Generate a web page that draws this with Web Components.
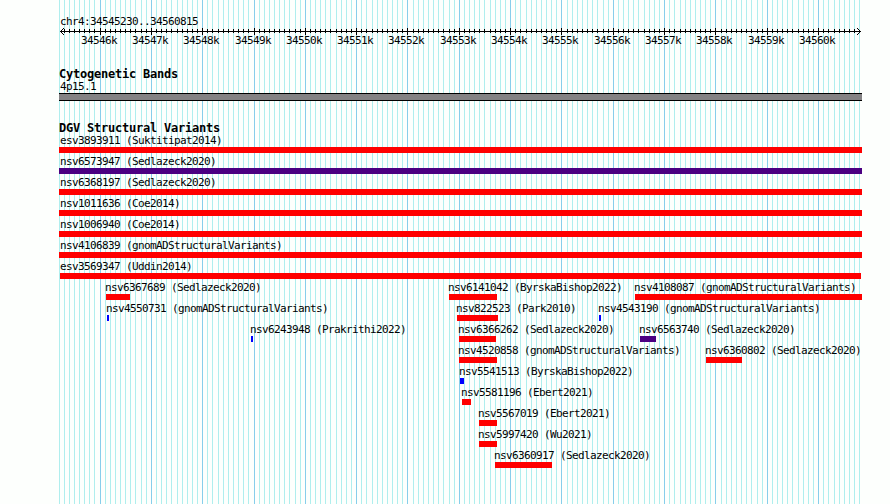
<!DOCTYPE html>
<html lang="en">
<head>
<meta charset="utf-8">
<title>chr4:34545230..34560815</title>
<style>
  html, body { margin: 0; background: #fdfffd; }
</style>
</head>
<body>
<genome-browser></genome-browser>
<script>
const START = 34545230, END = 34560815, LEFT = 60, SPAN = 800;
const pos = bp => Math.max(59, Math.round(LEFT + (bp - START) * SPAN / (END - START + 1)));

/* Vertical grid lines every 100 bp, stronger every 1000 bp */
class GenomeGrid extends HTMLElement {
  constructor() {
    super();
    let lines = '';
    for (let bp = 34545200; bp <= 34560800; bp += 100) {
      lines += `<rect x="${pos(bp)}" y="0" width="1" height="504" fill="${bp % 1000 ? '#afeeee' : '#87ceeb'}"/>`;
    }
    this.attachShadow({ mode: 'open' }).innerHTML = `
      <style>:host{display:block;position:absolute;inset:0} svg{display:block}</style>
      <svg width="890" height="504" shape-rendering="crispEdges">${lines}</svg>`;
  }
}
customElements.define('genome-grid', GenomeGrid);

/* Axis with arrowheads, ticks and kilobase labels */
class GenomeRuler extends HTMLElement {
  constructor() {
    super();
    let ticks = '', labels = '';
    for (let bp = 34545300; bp <= 34560700; bp += 100) {
      const major = bp % 1000 === 0, x = pos(bp);
      ticks += `<rect x="${x}" y="${major ? 0 : 1}" width="1" height="${major ? 7 : 4}"/>`;
      if (major) labels += `<span style="margin-left:${x - 19}px">${bp / 1000}k</span>`;
    }
    this.attachShadow({ mode: 'open' }).innerHTML = `
      <style>
        :host{display:block}
        svg{display:block;height:6px;overflow:visible}
        .labels{display:grid;height:13px}
        span{grid-area:1/1;justify-self:start}
      </style>
      <svg width="890" shape-rendering="crispEdges">
        <rect x="60" y="3" width="801" height="1"/>${ticks}
        <path d="M61 2h1v1h-1zM62 1h1v1h-1zM63 0h1v1h-1zM61 4h1v1h-1zM62 5h1v1h-1zM63 6h1v1h-1z"/>
        <path d="M859 2h1v1h-1zM858 1h1v1h-1zM857 0h1v1h-1zM859 4h1v1h-1zM858 5h1v1h-1zM857 6h1v1h-1z"/>
      </svg>
      <div class="labels">${labels}</div>`;
  }
}
customElements.define('genome-ruler', GenomeRuler);

/* Bold heading above a track */
class TrackTitle extends HTMLElement {
  constructor() {
    super();
    this.attachShadow({ mode: 'open' }).innerHTML = `
      <style>:host{display:block;height:13px;margin-left:59px;font-size:12px;font-weight:bold;line-height:14px;letter-spacing:-.224px}</style>
      <slot></slot>`;
  }
}
customElements.define('track-title', TrackTitle);

/* One labelled variant: from / to are its pixel extent */
class VariantFeature extends HTMLElement {
  connectedCallback() {
    const from = +this.getAttribute('from'), to = +this.getAttribute('to');
    this.attachShadow({ mode: 'open' }).innerHTML = `
      <style>
        :host{display:block;grid-area:1/1;justify-self:start;margin-left:${from}px;width:${to - from}px}
        .label{height:13px;margin-left:${from > 60 ? -1 : 60 - from}px}
        .bar{height:6px;background:${this.getAttribute('color')}}
      </style>
      <div class="label"><slot></slot></div><div class="bar"></div>`;
  }
}
customElements.define('variant-feature', VariantFeature);

const R = '#ff0000', B = '#0000ff', P = '#4b0082';
const ROWS = [
  [[59, 862, R, 'esv3893911 (Suktitipat2014)']],
  [[59, 862, P, 'nsv6573947 (Sedlazeck2020)']],
  [[59, 862, R, 'nsv6368197 (Sedlazeck2020)']],
  [[59, 862, R, 'nsv1011636 (Coe2014)']],
  [[59, 862, R, 'nsv1006940 (Coe2014)']],
  [[59, 862, R, 'nsv4106839 (gnomADStructuralVariants)']],
  [[60, 861, R, 'esv3569347 (Uddin2014)']],
  [[106, 130, R, 'nsv6367689 (Sedlazeck2020)'], [449, 497, R, 'nsv6141042 (ByrskaBishop2022)'], [635, 862, R, 'nsv4108087 (gnomADStructuralVariants)']],
  [[107, 109, B, 'nsv4550731 (gnomADStructuralVariants)'], [457, 498, R, 'nsv822523 (Park2010)'], [599, 601, B, 'nsv4543190 (gnomADStructuralVariants)']],
  [[251, 253, B, 'nsv6243948 (Prakrithi2022)'], [459, 496, R, 'nsv6366262 (Sedlazeck2020)'], [640, 656, P, 'nsv6563740 (Sedlazeck2020)']],
  [[459, 497, R, 'nsv4520858 (gnomADStructuralVariants)'], [706, 742, R, 'nsv6360802 (Sedlazeck2020)']],
  [[460, 464, B, 'nsv5541513 (ByrskaBishop2022)']],
  [[462, 471, R, 'nsv5581196 (Ebert2021)']],
  [[479, 497, R, 'nsv5567019 (Ebert2021)']],
  [[479, 497, R, 'nsv5997420 (Wu2021)']],
  [[495, 552, R, 'nsv6360917 (Sedlazeck2020)']]
];

class VariantTrack extends HTMLElement {
  constructor() {
    super();
    this.attachShadow({ mode: 'open' }).innerHTML = `
      <style>:host{display:flex;flex-direction:column;gap:2px} .row{display:grid;height:19px}</style>
      ${ROWS.map(r => `<div class="row">${r.map(([f, t, c, n]) =>
        `<variant-feature from="${f}" to="${t}" color="${c}">${n}</variant-feature>`).join('')}</div>`).join('')}`;
  }
}
customElements.define('variant-track', VariantTrack);

class CytoBand extends HTMLElement {
  constructor() {
    super();
    this.attachShadow({ mode: 'open' }).innerHTML = `
      <style>
        :host{display:block;margin-left:59px;width:803px}
        .label{height:13px;margin-left:1px}
        .band{box-sizing:border-box;height:8px;background:#848284;border:solid #000;border-width:1px 0}
      </style>
      <div class="label"><slot></slot></div><div class="band"></div>`;
  }
}
customElements.define('cyto-band', CytoBand);

class GenomeBrowser extends HTMLElement {
  constructor() {
    super();
    this.attachShadow({ mode: 'open' }).innerHTML = `
      <style>
        :host{display:block;position:relative;width:890px;height:504px;overflow:hidden;
          font:11px/13px "DejaVu Sans Mono",monospace;letter-spacing:-.622px;color:#000;white-space:nowrap}
        main{position:relative;display:flex;flex-direction:column;padding-top:15px}
        .region{height:13px;margin-left:60px}
        section{padding-top:20px}
      </style>
      <genome-grid></genome-grid>
      <main>
        <div class="region">chr4:34545230..34560815</div>
        <genome-ruler></genome-ruler>
        <section><track-title>Cytogenetic Bands</track-title><cyto-band>4p15.1</cyto-band></section>
        <section><track-title>DGV Structural Variants</track-title><variant-track></variant-track></section>
      </main>`;
  }
}
customElements.define('genome-browser', GenomeBrowser);
</script>
</body>
</html>
